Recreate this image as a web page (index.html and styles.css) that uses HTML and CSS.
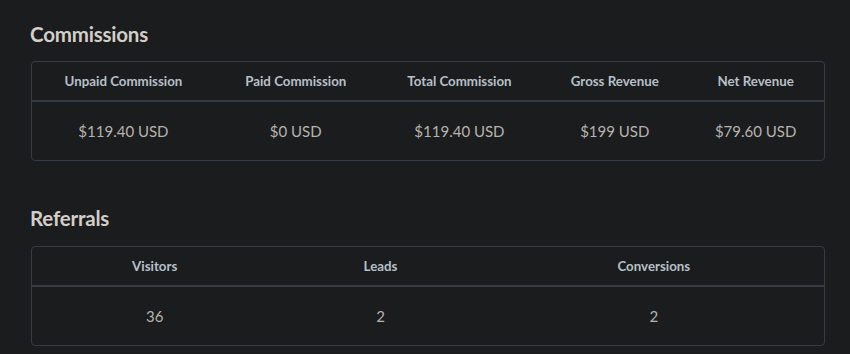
FILE: index.html
```html
<!DOCTYPE html>
<html lang="en">
<head>
<meta charset="utf-8">
<title>Affiliate Stats</title>
<link rel="stylesheet" href="styles.css">
</head>
<body>
<main class="page">
  <section class="section">
    <h2 class="section-title">Commissions</h2>
    <div class="card">
      <table class="stats">
        <thead>
          <tr>
            <th>Unpaid Commission</th>
            <th>Paid Commission</th>
            <th>Total Commission</th>
            <th>Gross Revenue</th>
            <th>Net Revenue</th>
          </tr>
        </thead>
        <tbody>
          <tr>
            <td>$119.40 USD</td>
            <td>$0 USD</td>
            <td>$119.40 USD</td>
            <td>$199 USD</td>
            <td>$79.60 USD</td>
          </tr>
        </tbody>
      </table>
    </div>
  </section>
  <section class="section">
    <h2 class="section-title">Referrals</h2>
    <div class="card">
      <table class="stats">
        <thead>
          <tr>
            <th>Visitors</th>
            <th>Leads</th>
            <th>Conversions</th>
          </tr>
        </thead>
        <tbody>
          <tr>
            <td>36</td>
            <td>2</td>
            <td>2</td>
          </tr>
        </tbody>
      </table>
    </div>
  </section>
</main>
</body>
</html>
```

FILE: styles.css
```css
html, body {
  margin: 0;
  padding: 0;
  background: #1b1c1e;
}

body {
  font-family: Lato, "Open Sans", sans-serif;
  color: #b9b6b1;
}

.page {
  padding: 0 25px 0 31px;
}

.section-title {
  margin: 0 0 0 -1px;
  font-size: 20.5px;
  font-weight: 700;
  color: #d3cec8;
  line-height: 24px;
  letter-spacing: -0.2px;
}

.section:first-child .section-title {
  padding-top: 22px;
  padding-bottom: 15px;
}

.section + .section .section-title {
  padding-top: 45px;
  padding-bottom: 16px;
}

.card {
  border: 1px solid #353c43;
  border-radius: 4px;
  overflow: hidden;
}

.stats {
  width: 100%;
  border-collapse: collapse;
  text-align: center;
}

.stats th {
  height: 38px;
  padding: 0 13px;
  font-size: 13.3px;
  font-weight: 700;
  color: #b7c0c8;
  border-bottom: 2px solid #353c43;
}

.stats td {
  height: 58px;
  padding: 0 13px;
  font-size: 15px;
  font-weight: 400;
  color: #b7b3ad;
}
```
